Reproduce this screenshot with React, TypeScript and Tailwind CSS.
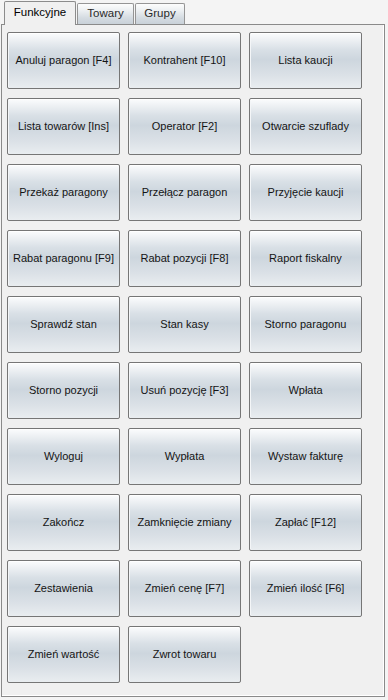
const labels = [
  'Anuluj paragon [F4]',
  'Kontrahent [F10]',
  'Lista kaucji',
  'Lista towarów [Ins]',
  'Operator [F2]',
  'Otwarcie szuflady',
  'Przekaż paragony',
  'Przełącz paragon',
  'Przyjęcie kaucji',
  'Rabat paragonu [F9]',
  'Rabat pozycji [F8]',
  'Raport fiskalny',
  'Sprawdź stan',
  'Stan kasy',
  'Storno paragonu',
  'Storno pozycji',
  'Usuń pozycję [F3]',
  'Wpłata',
  'Wyloguj',
  'Wypłata',
  'Wystaw fakturę',
  'Zakończ',
  'Zamknięcie zmiany',
  'Zapłać [F12]',
  'Zestawienia',
  'Zmień cenę [F7]',
  'Zmień ilość [F6]',
  'Zmień wartość',
  'Zwrot towaru',
];

const tabs = ['Funkcyjne', 'Towary', 'Grupy'];

export default function App() {
  return (
    <div className="h-[700px] w-[388px] bg-[#f4f4f4] font-['Liberation_Sans',Arial,sans-serif] text-[11px] text-[#1b1b1b]">
      {/* tab strip */}
      <div className="flex h-[24px] items-end pl-[4px] gap-[1px]">
        {tabs.map((t, i) =>
          i === 0 ? (
            <div
              key={t}
              className="relative z-10 -mb-px flex h-[24px] w-[72px] items-center justify-center rounded-t-[2px] border border-b-0 border-[#8c8c8c] bg-[#f0f0f0] pb-[1px] text-[11.5px] text-black"
            >
              {t}
            </div>
          ) : (
            <div
              key={t}
              className="flex h-[21px] items-center justify-center rounded-t-[2px] border border-b-0 border-[#959595] bg-[linear-gradient(to_bottom,#fdfdfd_0%,#eef1f3_30%,#d4dbe1_70%,#c9d1d8_100%)] px-[8px] text-[11.5px] text-[#2a2a2a]"
              style={{ width: i === 1 ? 57 : 50 }}
            >
              {t}
            </div>
          ),
        )}
      </div>

      {/* panel */}
      <div className="ml-[1px] h-[673px] w-[384px] border border-[#8a8a8a] bg-[#f0f0f0] pl-[5px] pt-[7px] shadow-[inset_-1px_-1px_0_#ffffff]">
        <div className="grid grid-cols-[113px_113px_113px] auto-rows-[57px] gap-x-[8px] gap-y-[9px]">
          {labels.map((l) => (
            <button
              key={l}
              className="flex items-center justify-center rounded-[2px] border border-[#767676] bg-[linear-gradient(to_bottom,#fbfcfd_0%,#eef1f4_12%,#d9e0e6_30%,#cdd6de_48%,#dae0e6_75%,#e9edf0_100%)] shadow-[inset_0_1px_0_#ffffff,inset_1px_0_0_#f4f6f8] text-[11px] text-[#141414]"
            >
              {l}
            </button>
          ))}
        </div>
      </div>
    </div>
  );
}
